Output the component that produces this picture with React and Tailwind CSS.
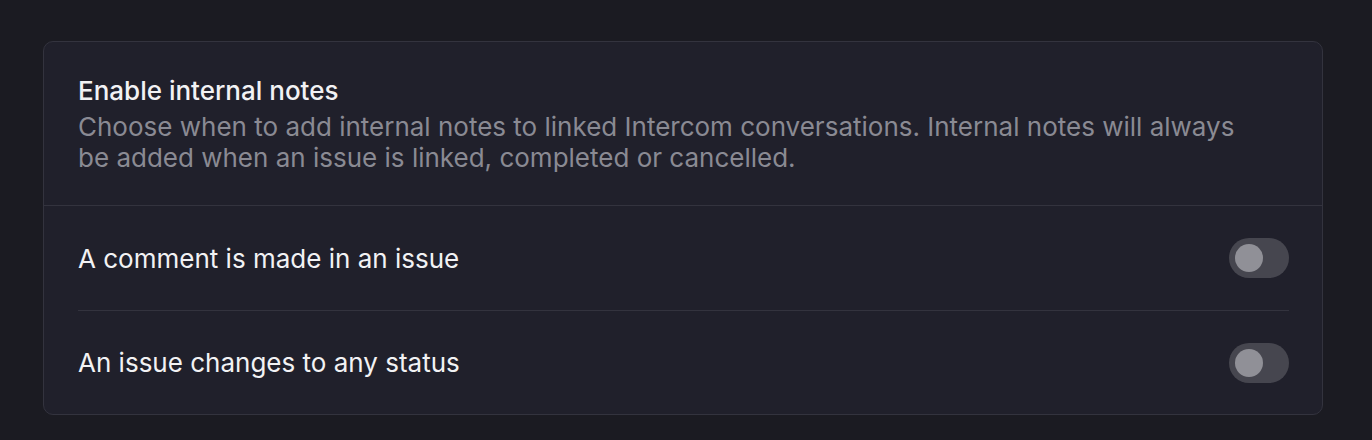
import React, { useState } from 'react'

const Toggle = ({ on, onChange }) => (
  <button
    onClick={() => onChange(!on)}
    className={`flex items-center w-[60px] h-[40px] rounded-full px-[6px] ${on ? 'bg-[#5e6ad2] justify-end' : 'bg-[#46464f] justify-start'}`}
  >
    <span className={`block w-[28px] h-[28px] rounded-full ${on ? 'bg-white' : 'bg-[#909097]'}`} />
  </button>
)

const App = () => {
  const [comment, setComment] = useState(false)
  const [status, setStatus] = useState(false)

  const rows = [
    { label: 'A comment is made in an issue', on: comment, set: setComment },
    { label: 'An issue changes to any status', on: status, set: setStatus }
  ]

  return (
    <div className="min-h-[440px] bg-[#1b1b22] pl-[43px] pr-[49px] pt-[41px] pb-[25px]" style={{ fontFamily: 'Inter, "Noto Sans", sans-serif' }}>
      <div className="bg-[#20202b] border border-[#33333e] rounded-[10px]">
        <div className="px-[34px] pt-[33px] pb-[32px] border-b border-[#33333e]">
          <h2 className="text-[26px] leading-[31px] font-medium text-[#f2f2f4]">Enable internal notes</h2>
          <p className="text-[26px] leading-[31px] text-[#8a8a93] mt-[5px] max-w-[1170px]">
            Choose when to add internal notes to linked Intercom conversations. Internal notes will always be added when an issue is linked, completed or cancelled.
          </p>
        </div>
        <div className="pl-[34px] pr-[33px]">
          {rows.map((row, i) => (
            <div key={i} className={`flex items-center justify-between h-[104px] ${i > 0 ? 'border-t border-[#33333e]' : ''}`}>
              <span className="text-[26px] text-[#f2f2f4]">{row.label}</span>
              <Toggle on={row.on} onChange={row.set} />
            </div>
          ))}
        </div>
      </div>
    </div>
  )
}

export default App
